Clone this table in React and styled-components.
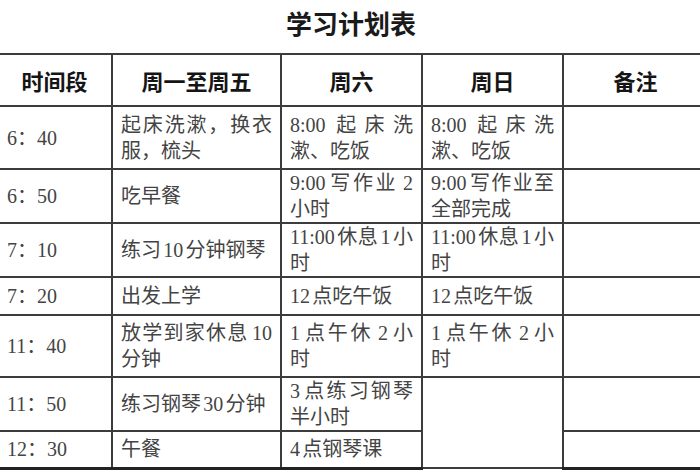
import React from "react";
import styled, { createGlobalStyle } from "styled-components";

const GlobalStyle = createGlobalStyle`
  * {
    box-sizing: border-box;
  }
  body {
    margin: 0;
    background: #ffffff;
    overflow: hidden;
    font-family: "Liberation Serif", "Noto Sans CJK SC", serif;
  }
`;

const Page = styled.div`
  width: 700px;
  height: 470px;
  overflow: hidden;
  background: #ffffff;
`;

const Title = styled.h1`
  margin: 0;
  height: 53px;
  line-height: 52px;
  text-align: center;
  font-size: 26px;
  font-weight: 700;
  color: #1a1a1a;
  padding-left: 2px;
`;

const Sheet = styled.table`
  width: 711px;
  margin-left: -4px;
  border-collapse: collapse;
  table-layout: fixed;
`;

const HeadRow = styled.tr`
  height: 52px;
`;

const Row = styled.tr`
  height: ${(p) => p.$h}px;

  &:last-child td {
    border-bottom-width: 3px;
    border-bottom-color: #222;
  }
`;

const HeadCell = styled.th`
  border: 2px solid #3c3c3c;
  font-size: 22px;
  font-weight: 700;
  color: #151515;
  text-align: center;
  vertical-align: middle;
  padding: 0;
`;

const Cell = styled.td`
  border: 2px solid #3c3c3c;
  font-size: 20px;
  line-height: 26px;
  color: #444444;
  vertical-align: middle;
  text-align: justify;
  word-spacing: -2.8px;
  padding: 0 8px 0 ${(p) => (p.$first ? 9 : 8)}px;
`;

const columns = [
  { key: "time", label: "时间段", width: 115 },
  { key: "weekday", label: "周一至周五", width: 169 },
  { key: "sat", label: "周六", width: 141 },
  { key: "sun", label: "周日", width: 141 },
  { key: "note", label: "备注", width: 145 },
];

const rows = [
  { h: 63, time: "6：40", weekday: "起床洗漱，换衣服，梳头", sat: "8:00 起床洗漱、吃饭", sun: "8:00 起床洗漱、吃饭", note: "" },
  { h: 52, time: "6：50", weekday: "吃早餐", sat: "9:00 写作业 2 小时", sun: "9:00 写作业至全部完成", note: "" },
  { h: 52, time: "7：10", weekday: "练习 10 分钟钢琴", sat: "11:00 休息 1 小时", sun: "11:00 休息 1 小时", note: "" },
  { h: 38, time: "7：20", weekday: "出发上学", sat: "12 点吃午饭", sun: "12 点吃午饭", note: "" },
  { h: 62, time: "11：40", weekday: "放学到家休息 10 分钟", sat: "1 点午休 2 小时", sun: "1 点午休 2 小时", note: "" },
  { h: 52, time: "11：50", weekday: "练习钢琴 30 分钟", sat: "3 点练习钢琴半小时", sun: "", sunSpan: 2, note: "" },
  { h: 37, time: "12：30", weekday: "午餐", sat: "4 点钢琴课", sunSkip: true, note: "" },
];

export default function App() {
  return (
    <Page>
      <GlobalStyle />
      <Title>学习计划表</Title>
      <Sheet>
        <colgroup>
          {columns.map((c) => (
            <col key={c.key} style={{ width: c.width }} />
          ))}
        </colgroup>
        <thead>
          <HeadRow>
            {columns.map((c) => (
              <HeadCell key={c.key}>{c.label}</HeadCell>
            ))}
          </HeadRow>
        </thead>
        <tbody>
          {rows.map((r) => (
            <Row key={r.time} $h={r.h}>
              <Cell $first>{r.time}</Cell>
              <Cell>{r.weekday}</Cell>
              <Cell>{r.sat}</Cell>
              {!r.sunSkip && <Cell rowSpan={r.sunSpan || 1}>{r.sun}</Cell>}
              <Cell>{r.note}</Cell>
            </Row>
          ))}
        </tbody>
      </Sheet>
    </Page>
  );
}
